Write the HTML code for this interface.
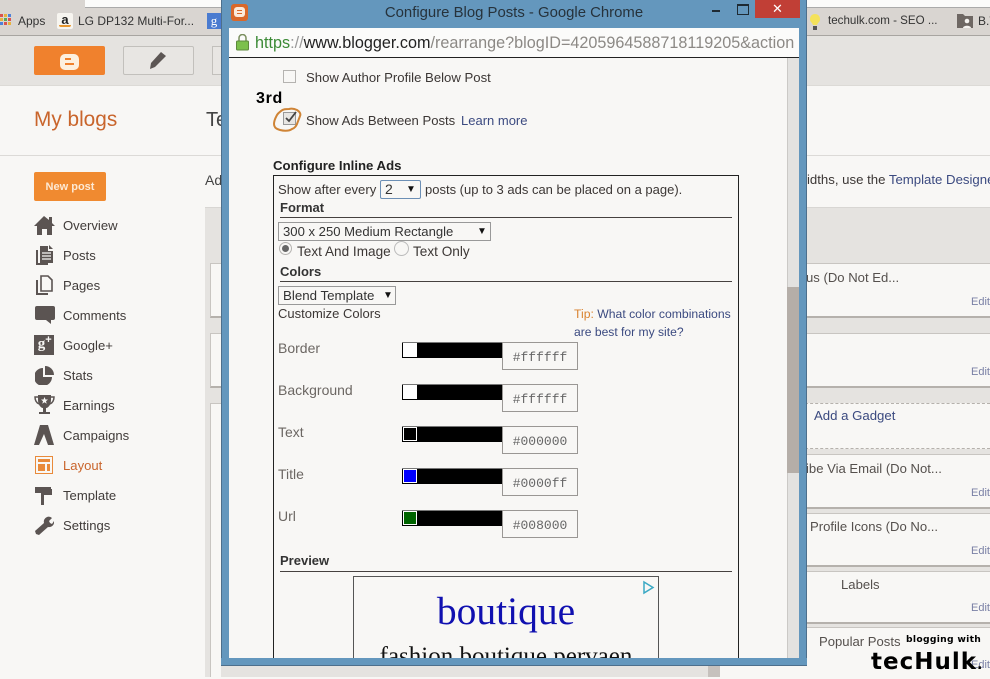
<!DOCTYPE html>
<html><head><meta charset="utf-8">
<style>
html,body{margin:0;padding:0}
body{width:990px;height:677px;overflow:hidden;position:relative;background:#f8f7f5;font-family:"Liberation Sans",sans-serif;color:#3c3735}
.a{position:absolute}
.t{position:absolute;white-space:nowrap;line-height:16px}
.nav{font-size:13.1px;color:#413c3a;left:63px}
.w{position:absolute;background:#f8f7f5;border-top:1px solid #c8c5c1;border-bottom:2px solid #b5b1ac;box-sizing:border-box}
.edit{position:absolute;font-size:11px;color:#7a80a5;left:971px;white-space:nowrap;line-height:14px}
.l{color:#3b4a80}
.h{position:absolute;height:1px;background:#46413f}
.lab{position:absolute;left:278px;font-size:14px;color:#6c6763;line-height:16px}
.sw{position:absolute;left:402px;width:100px;height:15px;background:#000;border-top:1px solid #777}
.sw i{position:absolute;left:1px;top:0;width:12px;height:12px;border:1px solid #fff;display:block}
.hex{position:absolute;left:502px;width:76px;height:28px;box-sizing:border-box;border:1px solid #9a9794;background:#f8f7f5;font:13px/29px "Liberation Mono",monospace;color:#666;text-align:center}
.ar{position:absolute;top:0;font-size:10px;color:#111}
</style></head><body>

<!-- browser chrome -->
<div class="a" style="left:0;top:0;width:990px;height:36px;background:#d9d5d1;border-bottom:1px solid #a8a5a1;box-sizing:border-box"></div>
<div class="a" style="left:85px;top:0;width:905px;height:7px;background:#fbfbfa;border-bottom:1px solid #aaa"></div>
<svg class="a" style="left:0;top:14px" width="12" height="13"><g><rect x="0" y="0" width="3" height="3" fill="#d9534f"/><rect x="4" y="0" width="3" height="3" fill="#e8b23c"/><rect x="8" y="0" width="3" height="3" fill="#4f81d9"/><rect x="0" y="4" width="3" height="3" fill="#e8b23c"/><rect x="4" y="4" width="3" height="3" fill="#5aa85a"/><rect x="8" y="4" width="3" height="3" fill="#d9534f"/><rect x="0" y="8" width="3" height="3" fill="#4f81d9"/><rect x="4" y="8" width="3" height="3" fill="#d9534f"/><rect x="8" y="8" width="3" height="3" fill="#e8b23c"/></g></svg>
<div class="t" style="left:18px;top:13px;font-size:12px;color:#333">Apps</div>
<div class="a" style="left:57px;top:13px;width:16px;height:16px;background:#f7f5f0;border-radius:2px;font:bold 13px/13px 'Liberation Sans',sans-serif;color:#222;text-align:center">a<div class="a" style="left:2px;top:12px;width:12px;height:2px;background:#e8962e;border-radius:0 0 6px 6px"></div></div>
<div class="t" style="left:78px;top:13px;font-size:12px;color:#333">LG DP132 Multi-For...</div>
<div class="a" style="left:207px;top:13px;width:14px;height:16px;background:#4a7bd0;font:13px/16px 'Liberation Serif',serif;color:#fff;text-align:center">g</div>
<svg class="a" style="left:808px;top:13px" width="14" height="18"><path d="M7 1a5 5 0 0 1 3 9l-1 2H5L4 10A5 5 0 0 1 7 1z" fill="#f4e25a"/><rect x="5" y="13" width="4" height="4" fill="#555"/></svg>
<div class="t" style="left:828px;top:13px;font-size:11.6px;color:#333">techulk.com - SEO ...</div>
<svg class="a" style="left:957px;top:14px" width="16" height="14"><path d="M0 0h6l2 2h8v12H0z" fill="#6e6763"/><circle cx="10" cy="7" r="2.3" fill="#f5f3f0"/><path d="M6 14c0-3 8-3 8 0z" fill="#f5f3f0"/></svg>
<div class="t" style="left:978px;top:13px;font-size:12px;color:#333">B.T</div>

<!-- blogger header -->
<div class="a" style="left:0;top:36px;width:990px;height:50px;background:#e5e3e0;border-bottom:1px solid #dcdad6;box-sizing:border-box"></div>
<div class="a" style="left:34px;top:46px;width:71px;height:29px;background:#f0812d;border-radius:2px"></div>
<div class="a" style="left:60px;top:54px;width:19px;height:16px;background:#fdf0df;border-radius:5px"><div class="a" style="left:5px;top:4px;width:6px;height:2px;background:#f0812d"></div><div class="a" style="left:5px;top:9px;width:9px;height:2px;background:#f0812d"></div></div>
<div class="a" style="left:123px;top:46px;width:71px;height:29px;box-sizing:border-box;border:1px solid #c2c0bc;background:#e8e6e3;border-radius:2px"></div>
<svg class="a" style="left:148px;top:50px" width="20" height="20"><path d="M2 19l1-6L13 2l5 4L7 17z" fill="#5c5654"/></svg>
<div class="a" style="left:212px;top:46px;width:20px;height:29px;box-sizing:border-box;border:1px solid #c2c0bc;background:#e8e6e3"></div>

<div class="t" style="left:34px;top:106px;font-size:20.8px;line-height:28px;color:#c9652c">My blogs</div>
<div class="t" style="left:206px;top:106px;font-size:20px;line-height:28px;color:#444">Te</div>
<div class="a" style="left:0;top:155px;width:990px;height:1px;background:#dcdad7"></div>

<!-- left nav -->
<div class="a" style="left:34px;top:172px;width:72px;height:29px;background:#f08a30;border-radius:2px;color:#fde9d4;font:bold 11px/30px 'Liberation Sans',sans-serif;text-align:center">New post</div>

<svg class="a" style="left:34px;top:215px" width="22" height="21"><path d="M10 1L0 11h3v9h5v-6h5v6h5v-9h3l-3-3V2h-3v3z" fill="#5b5452"/></svg>
<div class="t nav" style="top:218px">Overview</div>
<svg class="a" style="left:36px;top:245px" width="18" height="20"><path d="M0 5h2v13h10v2H0z" fill="#5b5452"/><path d="M4 1h8v5h5v12H4z" fill="#5b5452"/><path d="M6 8h9M6 11h9M6 14h9" stroke="#f8f7f5" stroke-width="1.2"/><path d="M13 0l4 4h-4z" fill="#5b5452"/></svg>
<div class="t nav" style="top:248px">Posts</div>
<svg class="a" style="left:36px;top:275px" width="18" height="20"><path d="M1 5v14h11" fill="none" stroke="#5b5452" stroke-width="2"/><path d="M5 1h7l4 4v11H5z" fill="none" stroke="#5b5452" stroke-width="1.6"/></svg>
<div class="t nav" style="top:278px">Pages</div>
<svg class="a" style="left:35px;top:306px" width="20" height="18"><path d="M2 0h16a2 2 0 0 1 2 2v10a2 2 0 0 1-2 2h-2v4l-5-4H2a2 2 0 0 1-2-2V2a2 2 0 0 1 2-2z" fill="#5b5452"/></svg>
<div class="t nav" style="top:308px">Comments</div>
<div class="a" style="left:34px;top:335px;width:20px;height:20px;background:#5b5452;color:#f8f7f5;font:bold 15px/18px 'Liberation Serif',serif;overflow:hidden">&nbsp;g<span style="font:bold 11px/10px 'Liberation Sans',sans-serif;vertical-align:5px">+</span></div>
<div class="t nav" style="top:338px">Google+</div>
<svg class="a" style="left:35px;top:366px" width="19" height="19"><path d="M8 2a9 9 0 1 0 9 9H8z" fill="#5b5452"/><path d="M10 0a9 9 0 0 1 9 9h-9z" fill="#5b5452"/></svg>
<div class="t nav" style="top:368px">Stats</div>
<svg class="a" style="left:34px;top:395px" width="21" height="21"><path d="M4 0h13v5c0 5-3 8-5 8v4h4v2H5v-2h4v-4c-2 0-5-3-5-8z" fill="#5b5452"/><path d="M4 2H1c0 4 2 6 4 7M17 2h3c0 4-2 6-4 7" fill="none" stroke="#5b5452" stroke-width="1.5"/><path d="M10.500 2l1 2.500h2.500l-2 1.700.7 2.600-2.200-1.500-2.200 1.500.7-2.600-2-1.700h2.500z" fill="#f8f7f5"/></svg>
<div class="t nav" style="top:398px">Earnings</div>
<svg class="a" style="left:34px;top:425px" width="20" height="20"><path d="M6 0h8l6 20h-6l-4-11-5 11H0z" fill="#5b5452"/></svg>
<div class="t nav" style="top:428px">Campaigns</div>
<div class="a" style="left:35px;top:456px;width:18px;height:18px;border:1px solid #e98a3a;box-sizing:border-box"><div class="a" style="left:2px;top:2px;width:12px;height:3px;background:#e98a3a"></div><div class="a" style="left:2px;top:7px;width:7px;height:7px;background:#e98a3a"></div><div class="a" style="left:11px;top:7px;width:3px;height:7px;background:#e98a3a"></div></div>
<div class="t nav" style="top:458px;color:#c9652c">Layout</div>
<svg class="a" style="left:35px;top:486px" width="19" height="19"><path d="M0 1h16v6H0z" fill="#5b5452"/><path d="M17 3v6H9v10H6V7h9V3z" fill="#5b5452"/></svg>
<div class="t nav" style="top:488px">Template</div>
<svg class="a" style="left:35px;top:516px" width="19" height="19"><path d="M12 1a5 5 0 0 1 5 1l-3 3 1 2 2 1 2-3a5 5 0 0 1-6 6L4 19l-3-1-1-3L9 7a5 5 0 0 1 3-6z" fill="#5b5452"/></svg>
<div class="t nav" style="top:518px">Settings</div>

<!-- main panel -->
<div class="t" style="left:205px;top:172px;font-size:14px;color:#444">Ad</div>
<div class="t" style="left:807px;top:172px;font-size:13.2px;color:#3c3735">idths, use the <span class="l">Template Designer</span></div>
<div class="a" style="left:205px;top:207px;width:785px;height:470px;background:#e5e3e0;border-top:1px solid #d8d6d3;box-sizing:border-box"></div>

<div class="w" style="left:210px;top:263px;width:12px;height:55px;border-left:1px solid #c8c5c1"></div>
<div class="w" style="left:210px;top:333px;width:12px;height:55px;border-left:1px solid #c8c5c1"></div>
<div class="w" style="left:210px;top:403px;width:12px;height:274px;border-left:1px solid #c8c5c1;border-bottom:0"></div>

<div class="w" style="left:800px;top:263px;width:190px;height:55px"></div>
<div class="w" style="left:800px;top:333px;width:190px;height:55px"></div>
<div class="a" style="left:800px;top:403px;width:190px;height:46px;background:#f8f7f5;border-top:1px dashed #b5b1ac;border-bottom:1px dashed #b5b1ac;box-sizing:border-box"></div>
<div class="w" style="left:800px;top:454px;width:190px;height:55px"></div>
<div class="w" style="left:800px;top:513px;width:190px;height:54px"></div>
<div class="w" style="left:800px;top:571px;width:190px;height:53px"></div>
<div class="w" style="left:720px;top:627px;width:270px;height:50px;border-bottom:0"></div>
<div class="a" style="left:708px;top:660px;width:12px;height:17px;background:#c6c1bd"></div>

<div class="t" style="left:806px;top:270px;font-size:13.1px;color:#55504d">us (Do Not Ed...</div>
<div class="edit" style="top:295px">Edit</div>
<div class="edit" style="top:365px">Edit</div>
<div class="t l" style="left:814px;top:408px;font-size:13.2px">Add a Gadget</div>
<div class="t" style="left:806px;top:461px;font-size:13.1px;color:#55504d">ibe Via Email (Do Not...</div>
<div class="edit" style="top:486px">Edit</div>
<div class="t" style="left:810px;top:519px;font-size:13.1px;color:#55504d">Profile Icons (Do No...</div>
<div class="edit" style="top:544px">Edit</div>
<div class="t" style="left:841px;top:577px;font-size:13.1px;color:#55504d">Labels</div>
<div class="edit" style="top:601px">Edit</div>
<div class="t" style="left:819px;top:634px;font-size:13.1px;color:#55504d">Popular Posts</div>
<div class="edit" style="top:658px">Edit</div>
<div class="t" style="left:906px;top:632px;font:bold 9.2px/16px 'DejaVu Sans',sans-serif;color:#000;letter-spacing:.3px">blogging with</div>
<div class="t" style="left:871px;top:648px;font:bold 23px/28px 'DejaVu Sans',sans-serif;color:#000;letter-spacing:1px">tecHulk<span style="font-size:14px">.</span></div>

<!-- popup window -->
<div class="a" style="left:221px;top:0;width:586px;height:666px;background:#6497bd;border:1px solid #4d6f8c;border-top:0;box-sizing:border-box"></div>
<div class="a" style="left:231px;top:4px;width:17px;height:17px;background:#d9682a;border-radius:3px"></div>
<div class="a" style="left:234px;top:7px;width:11px;height:10px;background:#fbeadb;border-radius:3px"><div class="a" style="left:3px;top:3px;width:5px;height:1px;background:#d9682a"></div><div class="a" style="left:3px;top:6px;width:5px;height:1px;background:#d9682a"></div></div>
<div class="t" style="left:221px;top:5px;width:586px;text-align:center;font-size:14.9px;color:#26323b">Configure Blog Posts - Google Chrome</div>
<div class="a" style="left:712px;top:10px;width:8px;height:2px;background:#1e2a33"></div>
<div class="a" style="left:737px;top:4px;width:10px;height:8px;border:1px solid #1e2a33;border-top-width:2px"></div>
<div class="a" style="left:755px;top:0;width:45px;height:18px;background:#c13f36;color:#fff;font:13px/17px 'Liberation Sans',sans-serif;text-align:center">✕</div>

<div class="a" style="left:229px;top:28px;width:570px;height:30px;background:#fbfbfa;border-bottom:1px solid #222;box-sizing:border-box"></div>
<svg class="a" style="left:236px;top:34px" width="13" height="17"><path d="M3 7V4a3.500 3.500 0 0 1 7 0v3" fill="none" stroke="#7b8f5f" stroke-width="1.500"/><rect x="0.500" y="7" width="12" height="9" rx="1" fill="#7cc04c" stroke="#5d8a3c"/></svg>
<div class="t" style="left:255px;top:34px;font-size:16.2px;line-height:18px;color:#8c8985;width:541px;overflow:hidden"><span style="color:#3b8a35">https</span><span style="color:#999">://</span><span style="color:#222">www.blogger.com</span>/rearrange?blogID=4205964588718119205&amp;action</div>

<div class="a" style="left:229px;top:58px;width:570px;height:600px;background:#f8f7f5;overflow:hidden">
  <div class="a" style="left:558px;top:0;width:12px;height:600px;background:#e3e2e0;border-left:1px solid #cbc9c6;box-sizing:border-box"></div>
  <div class="a" style="left:558px;top:229px;width:12px;height:186px;background:#b5aea8"></div>
</div>

<div class="a" style="left:283px;top:70px;width:13px;height:13px;border:1px solid #b5b3b0;box-sizing:border-box;background:#f8f7f5"></div>
<div class="t" style="left:306px;top:70px;font-size:13.15px;color:#3c3735">Show Author Profile Below Post</div>
<div class="t" style="left:256px;top:90px;font:bold 16px/17px 'Liberation Sans',sans-serif;letter-spacing:.7px;color:#000">3rd</div>
<div class="a" style="left:283px;top:112px;width:13px;height:13px;border:1px solid #999;box-sizing:border-box;background:#e8e6e3"></div>
<svg class="a" style="left:283px;top:110px" width="15" height="15"><path d="M3 8l3 3 7-9" fill="none" stroke="#444" stroke-width="1.800"/></svg>
<svg class="a" style="left:272px;top:104px" width="32" height="30"><path d="M9 7c2-2 5-2 8-2 3-1 6 0 8 1 3 2 4 4 3 6-1 3-2 5-3 8-1 2-2 4-5 5-3 2-8 2-12 1-4-1-6-3-6-6 0-4 2-7 3-9 1-2 3-3 4-4" fill="none" stroke="#cf8436" stroke-width="2"/></svg>
<div class="t" style="left:306px;top:113px;font-size:13.1px;color:#3c3735">Show Ads Between Posts</div>
<div class="t l" style="left:461px;top:113px;font-size:13px">Learn more</div>

<div class="t" style="left:273px;top:158px;font:bold 13.2px/16px 'Liberation Sans',sans-serif;color:#222">Configure Inline Ads</div>
<div class="a" style="left:273px;top:175px;width:466px;height:490px;border:1px solid #222;box-sizing:border-box"></div>
<div class="t" style="left:278px;top:182px;font-size:13.1px;color:#3c3735">Show after every</div>
<div class="a" style="left:380px;top:180px;width:41px;height:19px;box-sizing:border-box;border:1px solid #6c8fb5;border-radius:2px;font-size:14px;line-height:17px;padding-left:4px;color:#333">2<span class="ar" style="left:25px">▼</span></div>
<div class="t" style="left:425px;top:182px;font-size:13px;color:#3c3735">posts (up to 3 ads can be placed on a page).</div>
<div class="t" style="left:280px;top:200px;font:bold 13px/16px 'Liberation Sans',sans-serif;color:#333">Format</div>
<div class="h" style="left:280px;top:217px;width:452px"></div>
<div class="a" style="left:278px;top:222px;width:213px;height:19px;box-sizing:border-box;border:1px solid #999;font-size:13.1px;line-height:17px;padding-left:4px;color:#333">300 x 250 Medium Rectangle<span class="ar" style="left:198px">▼</span></div>
<div class="a" style="left:279px;top:242px;width:13px;height:13px;border:1px solid #b5b3b0;border-radius:50%;box-sizing:border-box"><div class="a" style="left:2px;top:2px;width:7px;height:7px;border-radius:50%;background:#666"></div></div>
<div class="t" style="left:297px;top:244px;font-size:13.6px;color:#3c3735">Text And Image</div>
<div class="a" style="left:394px;top:241px;width:15px;height:15px;border:1px solid #bbb;border-radius:50%;box-sizing:border-box"></div>
<div class="t" style="left:413px;top:244px;font-size:13.6px;color:#3c3735">Text Only</div>
<div class="t" style="left:280px;top:264px;font:bold 13px/16px 'Liberation Sans',sans-serif;color:#333">Colors</div>
<div class="h" style="left:280px;top:281px;width:452px"></div>
<div class="a" style="left:278px;top:286px;width:118px;height:19px;box-sizing:border-box;border:1px solid #999;font-size:13.3px;line-height:17px;padding-left:4px;color:#333">Blend Template<span class="ar" style="left:104px">▼</span></div>
<div class="t" style="left:278px;top:306px;font-size:13px;color:#3c3735">Customize Colors</div>
<div class="t" style="left:574px;top:306px;font-size:12.2px;color:#3b4a80"><span style="color:#d9822f">Tip:</span> What color combinations</div>
<div class="t l" style="left:574px;top:324px;font-size:12.1px">are best for my site?</div>

<div class="lab" style="top:340px">Border</div>
<div class="sw" style="top:342px"><i style="background:#fff"></i></div><div class="hex" style="top:342px">#ffffff</div>
<div class="lab" style="top:382px">Background</div>
<div class="sw" style="top:384px"><i style="background:#fff"></i></div><div class="hex" style="top:384px">#ffffff</div>
<div class="lab" style="top:424px">Text</div>
<div class="sw" style="top:426px"><i style="background:#000"></i></div><div class="hex" style="top:426px">#000000</div>
<div class="lab" style="top:466px">Title</div>
<div class="sw" style="top:468px"><i style="background:#00f"></i></div><div class="hex" style="top:468px">#0000ff</div>
<div class="lab" style="top:508px">Url</div>
<div class="sw" style="top:510px"><i style="background:#006400"></i></div><div class="hex" style="top:510px">#008000</div>

<div class="t" style="left:280px;top:553px;font:bold 13px/16px 'Liberation Sans',sans-serif;color:#333">Preview</div>
<div class="h" style="left:280px;top:571px;width:452px"></div>
<div class="a" style="left:353px;top:576px;width:306px;height:82px;box-sizing:border-box;border:1px solid #555;border-bottom:0;overflow:hidden">
  <div class="t" style="left:0;width:304px;top:11px;text-align:center;font:39.5px/46px 'Liberation Serif',serif;color:#1010b0">boutique</div>
  <svg class="a" style="left:288px;top:3px" width="13" height="15"><path d="M2 2l9 5.500-9 5.500z" fill="none" stroke="#3ba9c4" stroke-width="1.500"/></svg>
  <div class="t" style="left:0;width:304px;top:67px;text-align:center;font:25px/26px 'Liberation Serif',serif;color:#111">fashion boutique pervaen</div>
</div>

<!-- cover bottom edge of popup content -->
<div class="a" style="left:221px;top:658px;width:586px;height:8px;background:#6497bd;border-bottom:1px solid #4d6f8c;box-sizing:border-box"></div>
<div class="a" style="left:221px;top:666px;width:487px;height:11px;background:#e5e3e0"></div>
<div class="a" style="left:708px;top:666px;width:12px;height:11px;background:#c6c1bd"></div>
<div class="a" style="left:720px;top:666px;width:87px;height:11px;background:#f8f7f5"></div>
</body></html>
